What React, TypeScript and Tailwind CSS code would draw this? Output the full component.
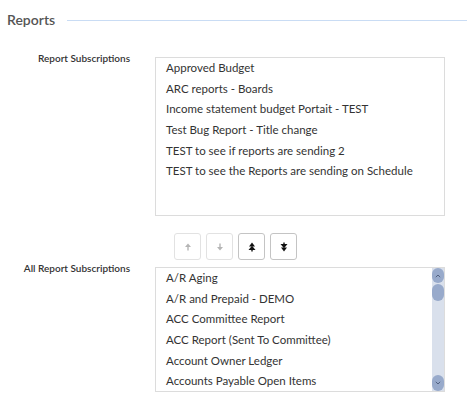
import React from "react";

const selected = [
  "Approved Budget",
  "ARC reports - Boards",
  "Income statement budget Portait - TEST",
  "Test Bug Report - Title change",
  "TEST to see if reports are sending 2",
  "TEST to see the Reports are sending on Schedule",
];

const all = [
  "A/R Aging",
  "A/R and Prepaid - DEMO",
  "ACC Committee Report",
  "ACC Report (Sent To Committee)",
  "Account Owner Ledger",
  "Accounts Payable Open Items",
];

const ArrowIcon = ({ dir, double }: { dir: "up" | "down"; double?: boolean }) => {
  const flip = dir === "down" ? "rotate(180 4 5)" : undefined;
  return (
    <svg width="8" height="10" viewBox="0 0 8 10">
      <g transform={flip}>
        {double ? (
          <>
            <path d="M4 0.5 L7 4.5 H1 Z" fill="currentColor" />
            <path d="M4 3.8 L7.5 8 H0.5 Z" fill="currentColor" />
            <rect x="3.3" y="7.5" width="1.4" height="2" fill="currentColor" />
          </>
        ) : (
          <>
            <path d="M4 1.5 L7 5 H1 Z" fill="currentColor" />
            <rect x="3.3" y="4.5" width="1.4" height="4" fill="currentColor" />
          </>
        )}
      </g>
    </svg>
  );
};

const Btn = ({ children, disabled }: { children: React.ReactNode; disabled?: boolean }) => (
  <button
    className={
      disabled
        ? "w-[27px] h-[27px] rounded-[3px] border border-[#e2e2e2] bg-white text-[#b5b5b5] flex items-center justify-center"
        : "w-[27px] h-[27px] rounded-[3px] border border-[#c4c4c4] bg-white text-[#111] flex items-center justify-center"
    }
  >
    {children}
  </button>
);

const Scrollbar = () => (
  <div className="w-[12px] bg-[#d9e0ec] flex flex-col items-center">
    <div className="w-[12px] h-[15px] rounded-full bg-[#98aacb] flex items-center justify-center">
      <svg width="6" height="4" viewBox="0 0 6 4">
        <path d="M0.8 3.2 L3 1 L5.2 3.2" stroke="#4a5a78" strokeWidth="0.9" fill="none" />
      </svg>
    </div>
    <div className="w-[12px] h-[17px] rounded-full bg-[#98aacb] mt-[1px]" />
    <div className="flex-1" />
    <div className="w-[12px] h-[16px] rounded-full bg-[#98aacb] flex items-center justify-center">
      <svg width="6" height="4" viewBox="0 0 6 4">
        <path d="M0.8 0.8 L3 3 L5.2 0.8" stroke="#4a5a78" strokeWidth="0.9" fill="none" />
      </svg>
    </div>
  </div>
);

export default function App() {
  return (
    <div className="w-[467px] h-[402px] bg-white overflow-hidden font-['Lato',sans-serif]">
      <div className="flex items-center pl-[7px] pt-[10px]">
        <h2 className="text-[14px] font-semibold text-[#555] leading-[20px]">Reports</h2>
        <div className="flex-1 h-px bg-[#c9dcf4] ml-[12px]" />
      </div>

      <div className="flex mt-[27px]">
        <div className="w-[130px] text-right text-[10px] font-semibold text-[#333] leading-[13px] -mt-[5px]">
          Report Subscriptions
        </div>
        <div className="ml-[25px]">
          <div className="w-[290px] h-[159px] border border-[#dcdcdc] pl-[10px]">
            {selected.map((s) => (
              <div key={s} className="h-[20.7px] leading-[20.7px] text-[11.5px] text-[#333] whitespace-nowrap">
                {s}
              </div>
            ))}
          </div>
          <div className="flex gap-[5px] ml-[19px] mt-[17px]">
            <Btn disabled>
              <ArrowIcon dir="up" />
            </Btn>
            <Btn disabled>
              <ArrowIcon dir="down" />
            </Btn>
            <Btn>
              <ArrowIcon dir="up" double />
            </Btn>
            <Btn>
              <ArrowIcon dir="down" double />
            </Btn>
          </div>
        </div>
      </div>

      <div className="flex mt-[7px]">
        <div className="w-[130px] text-right text-[10px] font-semibold text-[#333] leading-[13px] -mt-[5px]">
          All Report Subscriptions
        </div>
        <div className="ml-[25px] w-[290px] h-[125px] border border-[#dcdcdc] flex">
          <div className="flex-1 pl-[10px] overflow-hidden">
            {all.map((s) => (
              <div key={s} className="h-[20.7px] leading-[20.7px] text-[11.5px] text-[#333] whitespace-nowrap">
                {s}
              </div>
            ))}
          </div>
          <Scrollbar />
        </div>
      </div>
    </div>
  );
}
